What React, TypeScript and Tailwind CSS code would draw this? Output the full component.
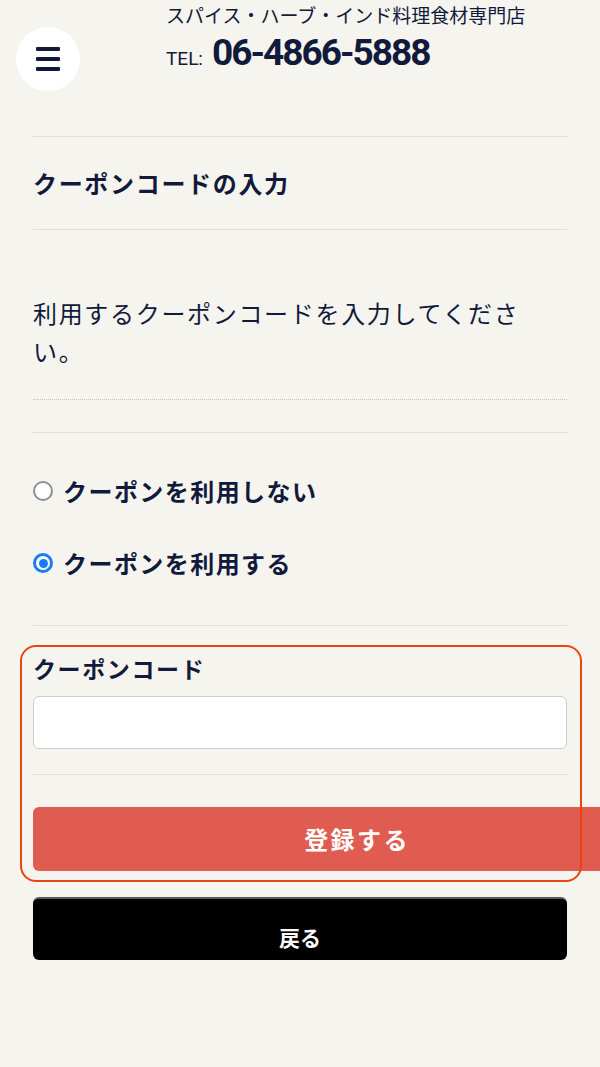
export default function App() {
  const jp = "font-['Noto_Sans_CJK_JP',sans-serif]";
  return (
    <div className={`min-h-[1067px] w-[600px] overflow-hidden bg-[#f6f4ef] text-[#111a3a] ${jp}`}>
      <header className="flex h-[136px] px-[16px]">
        <div className="mt-[27px] flex h-[64px] w-[64px] flex-col items-center justify-center gap-[6px] rounded-full bg-white">
          <span className="h-[4px] w-[24px] rounded-[1px] bg-[#111a3a]" />
          <span className="h-[4px] w-[24px] rounded-[1px] bg-[#111a3a]" />
          <span className="h-[4px] w-[24px] rounded-[1px] bg-[#111a3a]" />
        </div>
        <div className="ml-[86px] flex flex-col">
          <p className="pt-[3px] text-[19px] leading-[24px]">スパイス・ハーブ・インド料理食材専門店</p>
          <p className="mt-[6px] flex items-baseline gap-[9px] font-['Roboto',sans-serif]">
            <span className="text-[19px]">TEL:</span>
            <span className="text-[37px] leading-[40px] font-bold tracking-[-2px]">06-4866-5888</span>
          </p>
        </div>
      </header>

      <main className="relative px-[33px]">
        <div className="flex h-[94px] items-center border-y border-[#e4ddd0]">
          <h1 className="text-[24px] font-bold tracking-[0.07em]">クーポンコードの入力</h1>
        </div>

        <p className="border-b border-dotted border-[#c4c2bd] pt-[64px] pb-[29px] text-[24px] leading-[38px] tracking-[0.07em]">
          利用するクーポンコードを入力してください。
        </p>

        <div className="mt-[32px] border-y border-[#e4ddd0] pt-[39px] pb-[43px]">
          <label className="flex h-[38px] items-center gap-[10px]">
            <span className="h-[20px] w-[20px] rounded-full border-2 border-[#8e8e93] bg-white" />
            <span className="text-[24px] font-bold tracking-[0.06em]">クーポンを利用しない</span>
          </label>
          <label className="mt-[34px] flex h-[38px] items-center gap-[10px]">
            <span className="flex h-[20px] w-[20px] items-center justify-center rounded-full bg-[#1a7cf5]">
              <span className="flex h-[14px] w-[14px] items-center justify-center rounded-full bg-white">
                <span className="h-[9px] w-[9px] rounded-full bg-[#1a7cf5]" />
              </span>
            </span>
            <span className="text-[24px] font-bold tracking-[0.06em]">クーポンを利用する</span>
          </label>
        </div>

        <div className="pt-[24px]">
          <p className="h-[36px] text-[23px] leading-[36px] font-bold tracking-[0.07em]">クーポンコード</p>
          <input
            type="text"
            className="mt-[10px] block h-[53px] w-full rounded-[6px] border border-[#cfcdca] bg-white px-3 outline-none"
          />
          <div className="mt-[25px] border-t border-[#e2e0db]" />
          <button className="mt-[32px] flex h-[64px] w-[648px] items-center justify-center rounded-[6px] bg-[#e05c50] text-[24px] font-bold tracking-[0.1em] text-white">
            登録する
          </button>
          <button className="mt-[26px] flex h-[63px] w-full items-end justify-center rounded-[6px] border-t-2 border-[#5a5a5a] bg-black pb-[7px] text-[21px] font-bold text-white">
            戻る
          </button>
        </div>

        <div className="pointer-events-none absolute top-[509px] left-[20px] h-[237px] w-[562px] rounded-[16px] border-2 border-[#ec4410]" />
      </main>
    </div>
  );
}
